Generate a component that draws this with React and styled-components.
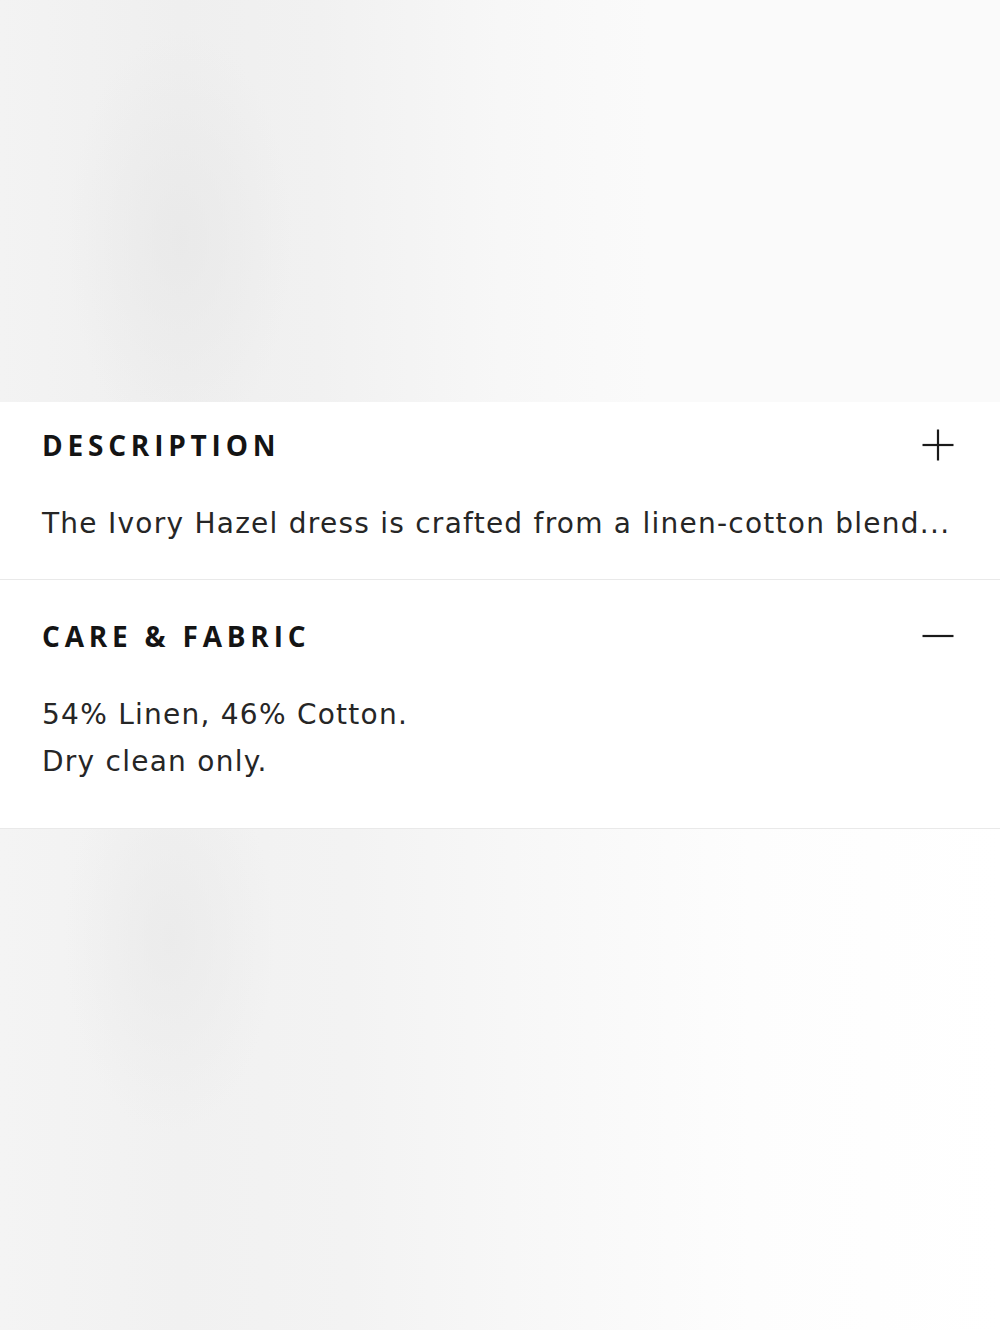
import React from "react";
import styled, { createGlobalStyle } from "styled-components";

const Global = createGlobalStyle`
  html, body { margin: 0; padding: 0; background: #fafafa; }
  body { font-family: "DejaVu Sans", "Open Sans", sans-serif; -webkit-font-smoothing: antialiased; }
  * { box-sizing: border-box; }
`;

const Page = styled.div`
  width: 1000px;
  height: 1330px;
  display: flex;
  flex-direction: column;
`;

/* soft product photo area above the details */
const Hero = styled.div`
  height: 402px;
  flex: none;
  background:
    radial-gradient(ellipse 150px 280px at 180px 240px, rgba(232,232,232,0.8), rgba(232,232,232,0) 75%),
    linear-gradient(90deg, #f3f3f3 0%, #efefef 18%, #f1f1f1 32%, #f7f7f7 50%, #fafafa 65%, #fafafa 100%);
`;

const Backdrop = styled.div`
  flex: 1;
  background:
    radial-gradient(ellipse 140px 260px at 170px 110px, rgba(234,234,234,0.8), rgba(234,234,234,0) 75%),
    linear-gradient(90deg, #f4f4f4 0%, #f1f1f1 18%, #f3f3f3 35%, #f8f8f8 55%, #fdfdfd 75%, #ffffff 100%);
`;

const Details = styled.div`
  background: #ffffff;
  display: flex;
  flex-direction: column;
`;

const Section = styled.section`
  padding: ${(p) => p.$top}px 46px ${(p) => p.$bottom}px 42px;
  border-bottom: 1px solid #e9e9e9;
  display: flex;
  flex-direction: column;
  gap: 39px;
`;

const Header = styled.div`
  height: 32px;
  display: flex;
  align-items: center;
  justify-content: space-between;
`;

const Title = styled.h3`
  margin: 0;
  font-family: "Open Sans", "Liberation Sans", sans-serif;
  font-weight: 700;
  font-size: 28px;
  letter-spacing: 4.8px;
  color: #141414;
  line-height: 1;
`;

const Toggle = styled.button`
  border: 0;
  background: none;
  padding: 0;
  width: 32px;
  height: 32px;
  display: flex;
  align-items: center;
  justify-content: center;
  color: #1a1a1a;
`;

const Body = styled.div`
  font-family: "DejaVu Sans", "Open Sans", sans-serif;
  font-size: 28px;
  line-height: 47px;
  letter-spacing: 1.25px;
  color: #262626;
`;

const Line = styled.p`
  margin: 0;
`;

function Icon({ open }) {
  return (
    <svg width="32" height="32" viewBox="0 0 32 32" fill="none" stroke="currentColor" strokeWidth="2.2">
      <line x1="0.5" y1="16" x2="31.5" y2="16" />
      {!open && <line x1="16" y1="0.5" x2="16" y2="31.5" />}
    </svg>
  );
}

const sections = [
  {
    title: "DESCRIPTION",
    open: false,
    top: 27,
    bottom: 32,
    lines: ["The Ivory Hazel dress is crafted from a linen-cotton blend..."],
  },
  {
    title: "CARE & FABRIC",
    open: true,
    top: 40,
    bottom: 43,
    lines: ["54% Linen, 46% Cotton.", "Dry clean only."],
  },
];

export default function App() {
  return (
    <>
      <Global />
      <Page>
        <Hero />
        <Details>
          {sections.map((s) => (
            <Section key={s.title} $top={s.top} $bottom={s.bottom}>
              <Header>
                <Title>{s.title}</Title>
                <Toggle aria-label={s.open ? "Collapse" : "Expand"}>
                  <Icon open={s.open} />
                </Toggle>
              </Header>
              <Body>
                {s.lines.map((l) => (
                  <Line key={l}>{l}</Line>
                ))}
              </Body>
            </Section>
          ))}
        </Details>
        <Backdrop />
      </Page>
    </>
  );
}
